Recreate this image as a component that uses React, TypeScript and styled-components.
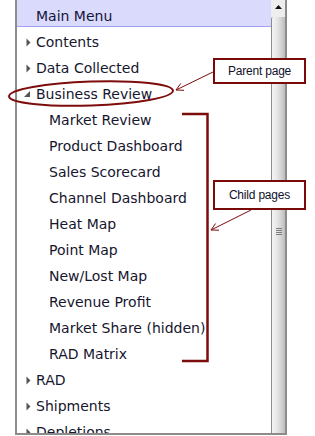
import styled, { createGlobalStyle } from 'styled-components';

const GlobalStyle = createGlobalStyle`
  html, body {
    margin: 0;
    padding: 0;
    background: #fff;
  }
  body {
    font-family: "DejaVu Sans", Verdana, sans-serif;
  }
`;

const Page = styled.div`
  position: relative;
  width: 315px;
  height: 436px;
  overflow: hidden;
  background: #fff;
`;

const Frame = styled.div`
  margin-left: 15px;
  width: 272px;
  height: 435px;
  box-sizing: border-box;
  border: 2px solid #8c8c8c;
  border-top: none;
  display: flex;
  overflow: hidden;
`;

const MenuPane = styled.div`
  flex: 1;
  min-width: 0;
  overflow: hidden;
`;

const Header = styled.div`
  height: 27px;
  box-sizing: border-box;
  padding: 6px 0 0 19px;
  line-height: 20px;
  font-size: 14px;
  color: #14143a;
  background: #dadafc;
  border-bottom: 1px solid #a0a0ec;
`;

const List = styled.div`
  padding-top: 2px;
`;

const Row = styled.div<{ $child?: boolean }>`
  display: flex;
  align-items: center;
  height: 26px;
  padding-left: ${(p) => (p.$child ? 32 : 9)}px;
  white-space: nowrap;
`;

const Toggle = styled.span`
  width: 10px;
  height: 26px;
  display: flex;
  align-items: center;
  flex-shrink: 0;
`;

const ArrowIcon = styled.svg<{ $shift?: number }>`
  margin-left: ${(p) => p.$shift ?? 0}px;
  margin-top: ${(p) => (p.$shift ? -1 : 0)}px;
`;

const Label = styled.span`
  font-size: 14px;
  line-height: 26px;
  color: #16162e;
`;

const Scrollbar = styled.div`
  width: 14px;
  display: flex;
  flex-direction: column;
  background: #ededed;
`;

const UpButton = styled.div`
  height: 17px;
  display: flex;
  justify-content: center;
  padding-top: 5px;
  box-sizing: border-box;
  background: #eeeeee;
`;

const Thumb = styled.div`
  flex: 1;
  border-left: 1px solid #8c8c8c;
  border-top-left-radius: 2px;
  background: linear-gradient(to right, #f4f4f4 0%, #e8e8e8 35%, #d4d4d4 70%, #bcbcbc 100%);
  display: flex;
  justify-content: center;
  padding-top: 211px;
  box-sizing: border-box;
`;

const Grip = styled.div`
  width: 6px;
  height: 8px;
  background: repeating-linear-gradient(to bottom, #7c7c7c 0 1px, transparent 1px 2px);
`;

const Overlay = styled.svg`
  position: absolute;
  left: 0;
  top: 0;
  pointer-events: none;
`;

const Callout = styled.div<{ $top: number; $height: number }>`
  position: absolute;
  left: 213px;
  top: ${(p) => p.$top}px;
  width: 93px;
  height: ${(p) => p.$height}px;
  box-sizing: border-box;
  border: 2px solid #7a0a0a;
  background: #fff;
  display: flex;
  align-items: center;
  justify-content: center;
  font-family: "Liberation Sans", Arial, sans-serif;
  font-size: 12px;
  letter-spacing: -0.2px;
  color: #10102a;
`;

type Item = { label: string; state?: 'closed' | 'open'; child?: boolean };

const items: Item[] = [
  { label: 'Contents', state: 'closed' },
  { label: 'Data Collected', state: 'closed' },
  { label: 'Business Review', state: 'open' },
  { label: 'Market Review', child: true },
  { label: 'Product Dashboard', child: true },
  { label: 'Sales Scorecard', child: true },
  { label: 'Channel Dashboard', child: true },
  { label: 'Heat Map', child: true },
  { label: 'Point Map', child: true },
  { label: 'New/Lost Map', child: true },
  { label: 'Revenue Profit', child: true },
  { label: 'Market Share (hidden)', child: true },
  { label: 'RAD Matrix', child: true },
  { label: 'RAD', state: 'closed' },
  { label: 'Shipments', state: 'closed' },
  { label: 'Depletions', state: 'closed' },
];

function Arrow({ open }: { open: boolean }) {
  return open ? (
    <ArrowIcon $shift={-3} width="8" height="8" viewBox="0 0 8 8">
      <polygon points="7,1 7,7 1,7" fill="#555" />
    </ArrowIcon>
  ) : (
    <ArrowIcon width="5" height="9" viewBox="0 0 5 9">
      <polygon points="0.5,0.5 4.5,4.5 0.5,8.5" fill="#555" />
    </ArrowIcon>
  );
}

const RED = '#7d0c0c';

function App() {
  return (
    <Page>
      <GlobalStyle />
      <Frame>
        <MenuPane>
          <Header>Main Menu</Header>
          <List>
            {items.map((it) => (
              <Row key={it.label} $child={it.child}>
                {it.state && (
                  <Toggle>
                    <Arrow open={it.state === 'open'} />
                  </Toggle>
                )}
                <Label>{it.label}</Label>
              </Row>
            ))}
          </List>
        </MenuPane>
        <Scrollbar>
          <UpButton>
            <svg width="7" height="4" viewBox="0 0 7 4">
              <polygon points="3.5,0 7,4 0,4" fill="#111" />
            </svg>
          </UpButton>
          <Thumb>
            <Grip />
          </Thumb>
        </Scrollbar>
      </Frame>

      <Overlay width="315" height="436" viewBox="0 0 315 436">
        <ellipse cx="91" cy="93.5" rx="82" ry="12" fill="none" stroke={RED} strokeWidth="2" transform="rotate(-2 91 93.5)" />
        <polyline points="182,114 207.5,114 207.5,361 182,361" fill="none" stroke={RED} strokeWidth="2.5" />
        <line x1="213" y1="72" x2="176" y2="90" stroke={RED} strokeWidth="1" />
        <polyline points="180.7,83.5 176,90 184,90.3" fill="none" stroke={RED} strokeWidth="1" />
        <line x1="251" y1="210" x2="211" y2="230" stroke={RED} strokeWidth="1" />
        <polyline points="215.6,223.5 211,230 219,230.2" fill="none" stroke={RED} strokeWidth="1" />
      </Overlay>
      <Callout $top={58} $height={26}>Parent page</Callout>
      <Callout $top={180} $height={30}>Child pages</Callout>
    </Page>
  );
}

export default App;
